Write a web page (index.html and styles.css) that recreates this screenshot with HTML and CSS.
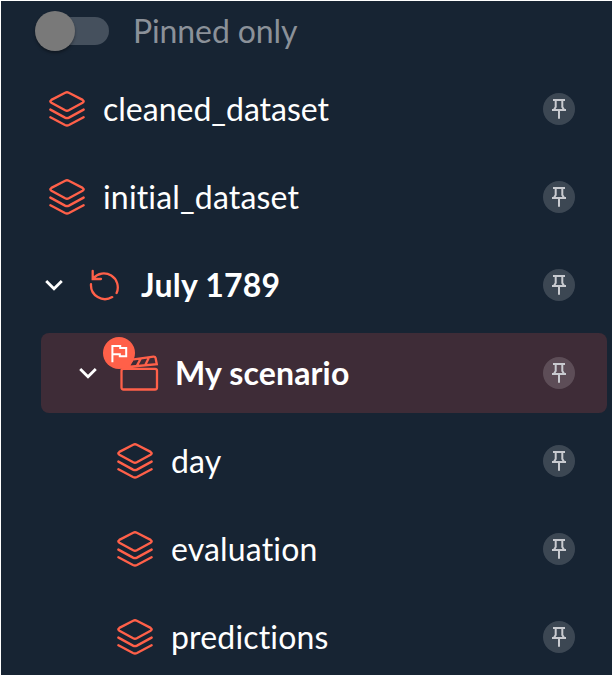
FILE: index.html
```
<!DOCTYPE html>
<html lang="en">
<head>
<meta charset="utf-8">
<title>Data nodes</title>
<link rel="stylesheet" href="styles.css">
</head>
<body>
<svg class="defs" aria-hidden="true">
  <symbol id="layers" viewBox="0 0 36 36"><path d="M16.2 1.7Q18 .8 19.8 1.7L33.6 8.9Q35.8 10.3 33.6 11.7L19.8 19.3Q18 20.2 16.2 19.3L2.4 11.7Q.2 10.3 2.4 8.9ZM1.4 18.6 16 26.6Q18 27.6 20 26.6L34.6 18.6M1.4 26.2 16 34Q18 35 20 34L34.6 26.2"/></symbol>
  <symbol id="pin" viewBox="0 0 32 32"><path d="M10 7H22M12.7 7V14L10.8 17M19.3 7V14L21.2 17M9 17H23M16 17V25.8"/></symbol>
  <symbol id="chevron" viewBox="0 0 20 12"><path d="M2.2 2 10 9.8 17.8 2"/></symbol>
</svg>
<main class="panel">
  <label class="filter"><span class="switch"><span class="thumb"></span></span>Pinned only</label>
  <ul class="tree">
    <li class="row"><svg class="layers"><use href="#layers"/></svg><span class="name">cleaned_dataset</span><svg class="pin"><use href="#pin"/></svg></li>
    <li class="row spaced"><svg class="layers"><use href="#layers"/></svg><span class="name">initial_dataset</span><svg class="pin"><use href="#pin"/></svg></li>
    <li class="row cycle"><svg class="chevron"><use href="#chevron"/></svg><svg class="restart" viewBox="0 0 32 32"><path d="M2 15.2A14 14 0 0 0 23.2 28.1M27.6 24A14 14 0 0 0 4.2 9.2M3.7 2V10H12"/></svg><span class="name">July 1789</span><svg class="pin"><use href="#pin"/></svg></li>
    <li class="row scenario"><svg class="chevron"><use href="#chevron"/></svg><span class="clapper"><svg viewBox="0 0 40 36"><path d="M4.5 13.8H36Q38 13.8 38 15.8V32.5Q38 34.5 36 34.5H4.5Q2.5 34.5 2.5 32.5V15.8Q2.5 13.8 4.5 13.8ZM3 12.5 37.8 9.2 36.6 3Q36.2 1.5 34.5 1.6L4 5.8M13.5 4.7 9.3 12M21.7 3.6 17.6 11.2M30 2.4 26 10.4"/></svg><span class="badge"><svg viewBox="0 0 32 32"><path d="M9.4 25.2V9H17.2V11H23.2V19.2H16.8V17.2H9.4"/></svg></span></span><span class="name">My scenario</span><svg class="pin"><use href="#pin"/></svg></li>
    <li class="row leaf spaced"><svg class="layers"><use href="#layers"/></svg><span class="name">day</span><svg class="pin"><use href="#pin"/></svg></li>
    <li class="row leaf spaced"><svg class="layers"><use href="#layers"/></svg><span class="name">evaluation</span><svg class="pin"><use href="#pin"/></svg></li>
    <li class="row leaf spaced"><svg class="layers"><use href="#layers"/></svg><span class="name">predictions</span><svg class="pin"><use href="#pin"/></svg></li>
  </ul>
</main>
</body>
</html>
```
FILE: styles.css
```
* { box-sizing: border-box; }
body { margin: 0; background: #fff; }
.defs { display: none; }
.panel {
  height: 676px;
  border: 1px solid #fff;
  background: #172433;
  color: #fff;
  font: 32px/40px Lato, sans-serif;
  font-variant-ligatures: none;
  overflow: hidden;
}
.filter {
  display: flex;
  align-items: center;
  height: 60px;
  padding-left: 40px;
  gap: 24px;
  color: #8b9199;
  letter-spacing: -.1px;
}
.switch {
  display: flex;
  align-items: center;
  width: 68px;
  height: 28px;
  border-radius: 14px;
  background: #45505d;
}
.thumb {
  flex: none;
  width: 40px;
  height: 40px;
  margin-left: -6px;
  border-radius: 50%;
  background: #797979;
  box-shadow: 0 2px 3px rgba(0, 0, 0, .35);
}
.tree {
  display: flex;
  flex-direction: column;
  gap: 8px;
  margin: 0;
  padding: 8px 5px 0 0;
  list-style: none;
}
.row {
  display: flex;
  align-items: center;
  height: 80px;
  padding: 0 32px 0 48px;
}
.spaced { letter-spacing: .17px; }
.row svg { fill: none; flex: none; }
.name { flex: 1; white-space: nowrap; }
.layers { width: 36px; height: 36px; margin-right: 18px; stroke: #ff6049; stroke-width: 2.4; stroke-linecap: round; }
.pin { width: 32px; height: 32px; border-radius: 50%; background: rgba(255, 255, 255, .16); stroke: #c9cbd0; stroke-width: 2; }
.chevron { width: 20px; height: 12px; stroke: #fff; stroke-width: 2.8; }
.cycle { padding-left: 43px; font-weight: bold; letter-spacing: .2px; }
.restart { width: 32px; height: 32px; margin: 0 20px 0 25px; stroke: #ff6049; stroke-width: 2.3; stroke-linecap: round; }
.leaf { padding-left: 116px; }
.scenario { margin-left: 40px; padding-left: 37px; border-radius: 8px; background: #3e2c37; font-weight: bold; letter-spacing: .15px; }
.clapper { position: relative; width: 40px; height: 36px; margin: 0 16px 0 21px; }
.clapper > svg { display: block; width: 40px; height: 36px; stroke: #ff6049; stroke-width: 2.3; }
.badge { position: absolute; top: -18px; left: -16px; width: 32px; height: 32px; border-radius: 50%; background: #ff6049; }
.badge svg { display: block; width: 32px; height: 32px; stroke: #fff; stroke-width: 2; }
```
